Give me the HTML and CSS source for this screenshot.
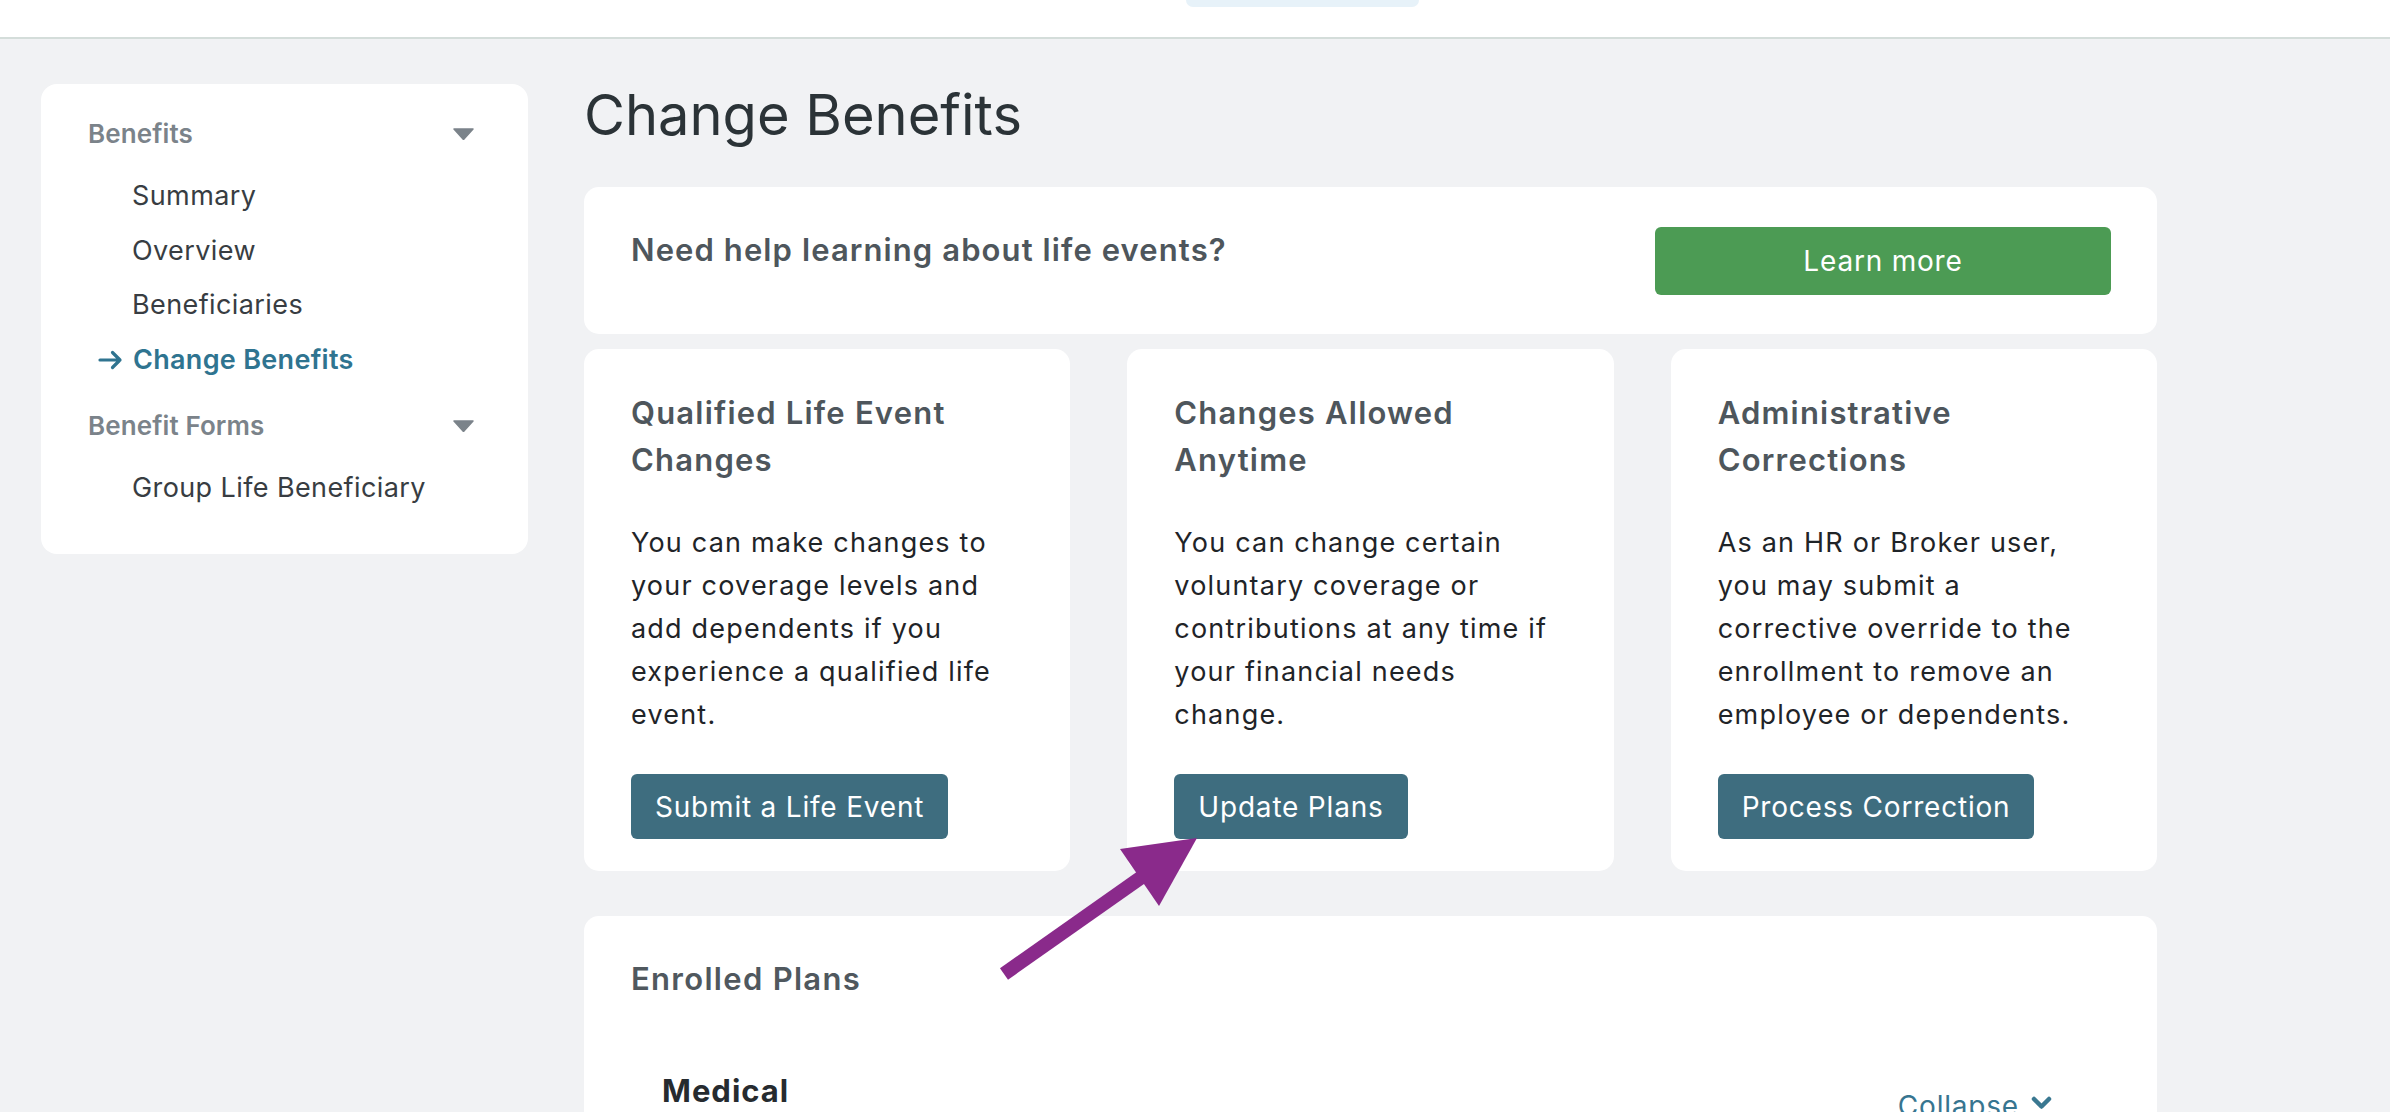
FILE: index.html
```html
<!DOCTYPE html>
<html lang="en">
<head>
<meta charset="utf-8">
<title>Change Benefits</title>
<link rel="stylesheet" href="styles.css">
</head>
<body>
<header class="topbar"><div class="topbar-tab"></div></header>
<div class="layout">
  <nav class="sidebar">
    <div class="nav-group">
      <div class="nav-head"><span>Benefits</span><svg class="caret" width="21" height="12" viewBox="0 0 21 12"><polygon points="1,1 20,1 10.5,11.5" fill="#7b838a" stroke="#7b838a" stroke-width="1.5" stroke-linejoin="round"/></svg></div>
      <ul class="nav-list">
        <li class="nav-item">Summary</li>
        <li class="nav-item">Overview</li>
        <li class="nav-item">Beneficiaries</li>
        <li class="nav-item active"><svg class="nav-arrow" width="25" height="20" viewBox="0 0 25 20"><path d="M2 10 H22 M14.5 2.5 L22 10 L14.5 17.5" fill="none" stroke="#2f7490" stroke-width="3.2" stroke-linecap="round" stroke-linejoin="round"/></svg>Change Benefits</li>
      </ul>
    </div>
    <div class="nav-group second">
      <div class="nav-head"><span>Benefit Forms</span><svg class="caret" width="21" height="12" viewBox="0 0 21 12"><polygon points="1,1 20,1 10.5,11.5" fill="#7b838a" stroke="#7b838a" stroke-width="1.5" stroke-linejoin="round"/></svg></div>
      <ul class="nav-list">
        <li class="nav-item">Group Life Beneficiary</li>
      </ul>
    </div>
  </nav>
  <main class="content">
    <h1 class="page-title">Change Benefits</h1>
    <section class="banner">
      <h2 class="banner-text">Need help learning about life events?</h2>
      <button class="btn btn-green">Learn more</button>
    </section>
    <section class="cards">
      <div class="card">
        <h3 class="card-title">Qualified Life Event Changes</h3>
        <p class="card-body">You can make changes to your coverage levels and add dependents if you experience a qualified life event.</p>
        <button class="btn btn-teal">Submit a Life Event</button>
      </div>
      <div class="card">
        <h3 class="card-title">Changes Allowed Anytime</h3>
        <p class="card-body">You can change certain voluntary coverage or contributions at any time if your financial needs change.</p>
        <button class="btn btn-teal">Update Plans</button>
      </div>
      <div class="card">
        <h3 class="card-title">Administrative Corrections</h3>
        <p class="card-body">As an HR or Broker user, you may submit a corrective override to the enrollment to remove an employee or dependents.</p>
        <button class="btn btn-teal">Process Correction</button>
      </div>
    </section>
    <section class="enrolled">
      <h2 class="enrolled-title">Enrolled Plans</h2>
      <div class="plan-row">
        <h3 class="plan-name">Medical</h3>
        <a class="collapse-link">Collapse <svg class="chev" width="21" height="14" viewBox="0 0 21 14"><path d="M3 3 L10.5 10.5 L18 3" fill="none" stroke="#3a7891" stroke-width="4.5" stroke-linecap="round" stroke-linejoin="round"/></svg></a>
      </div>
    </section>
  </main>
</div>
<svg class="annotation" width="2390" height="1112" viewBox="0 0 2390 1112">
  <line x1="1004" y1="974" x2="1146" y2="874" stroke="#8a2a8b" stroke-width="14"/>
  <polygon points="1120,849 1197,838 1159,906" fill="#8a2a8b"/>
</svg>
</body>
</html>
```
FILE: styles.css
```css
html, body {
  margin: 0;
  padding: 0;
  overflow: hidden;
}
body {
  background: #f1f2f4;
  font-family: Inter, "Noto Sans", "Liberation Sans", sans-serif;
  color: #1f2428;
  width: 2390px;
  height: 1112px;
  position: relative;
}
.topbar {
  height: 37px;
  background: #ffffff;
  border-bottom: 2px solid #d4ddda;
  padding-left: 1186px;
}
.topbar-tab {
  width: 233px;
  height: 7px;
  background: #e7f2f9;
  border-radius: 0 0 8px 8px;
}
.layout {
  display: flex;
  align-items: flex-start;
  gap: 56px;
  padding: 41px 0 0 41px;
}
.sidebar {
  width: 487px;
  box-sizing: border-box;
  margin-top: 4px;
  background: #ffffff;
  border-radius: 16px;
  padding: 30px 54px 38px 47px;
}
.nav-group.second {
  margin-top: 19px;
}
.nav-head {
  display: flex;
  justify-content: space-between;
  align-items: center;
  font-size: 26px;
  line-height: 40px;
  font-weight: 600;
  color: #7b838a;
  letter-spacing: 0.1px;
}
.nav-list {
  list-style: none;
  margin: 15px 0 0 0;
  padding: 0;
}
.nav-item {
  font-size: 27px;
  line-height: 54.5px;
  color: #383d42;
  padding-left: 44px;
  letter-spacing: 0.4px;
}
.nav-item.active {
  color: #2f7490;
  font-weight: 600;
  padding-left: 10px;
  display: flex;
  align-items: center;
  letter-spacing: 0.3px;
}
.nav-arrow {
  margin-right: 10px;
}
.content {
  width: 1573px;
}
.page-title {
  margin: 0 0 37px 0;
  font-size: 56px;
  line-height: 70px;
  font-weight: 400;
  color: #2b3337;
}
.banner {
  background: #ffffff;
  border-radius: 15px;
  display: flex;
  justify-content: space-between;
  align-items: flex-start;
  padding: 40px 46px 39px 47px;
}
.banner-text {
  margin: 0;
  font-size: 31px;
  line-height: 45px;
  font-weight: 600;
  color: #4e565c;
  letter-spacing: 1.1px;
}
.btn {
  font-family: Inter, "Noto Sans", "Liberation Sans", sans-serif;
  border: none;
  border-radius: 6px;
  color: #ffffff;
  font-size: 28px;
  font-weight: 400;
  letter-spacing: 0.8px;
  cursor: pointer;
}
.btn-green {
  background: #4c9b54;
  width: 456px;
  height: 68px;
}
.btn-teal {
  background: #3e6d7f;
  height: 65px;
  padding: 0 24px;
  align-self: flex-start;
}
.cards {
  display: grid;
  grid-template-columns: repeat(3, 1fr);
  column-gap: 57px;
  margin-top: 15px;
}
.card {
  background: #ffffff;
  border-radius: 15px;
  display: flex;
  flex-direction: column;
  padding: 40px 54px 32px 47px;
}
.card-title {
  margin: 0 0 38px 0;
  font-size: 31px;
  line-height: 47px;
  font-weight: 600;
  color: #4e565c;
  letter-spacing: 1.2px;
}
.card-body {
  margin: 0 0 38px 0;
  font-size: 27px;
  line-height: 43px;
  color: #1f2428;
  letter-spacing: 1.2px;
}
.enrolled {
  margin-top: 45px;
  background: #ffffff;
  border-radius: 15px 15px 0 0;
  padding: 40px 105px 300px 47px;
}
.enrolled-title {
  margin: 0;
  font-size: 31px;
  line-height: 45px;
  font-weight: 600;
  color: #50585e;
  letter-spacing: 1.3px;
}
.plan-row {
  margin-top: 67px;
  display: flex;
  justify-content: space-between;
  align-items: flex-start;
  padding-left: 31px;
}
.plan-name {
  margin: 0;
  font-size: 31px;
  line-height: 45px;
  font-weight: 700;
  color: #262b2f;
  letter-spacing: 1px;
}
.collapse-link {
  margin-top: 18px;
  font-size: 28px;
  line-height: 40px;
  color: #377590;
  display: flex;
  align-items: center;
  gap: 12px;
  letter-spacing: 0.8px;
}
.chev {
  margin-top: -6px;
}
.annotation {
  position: absolute;
  left: 0;
  top: 0;
  pointer-events: none;
}
```
